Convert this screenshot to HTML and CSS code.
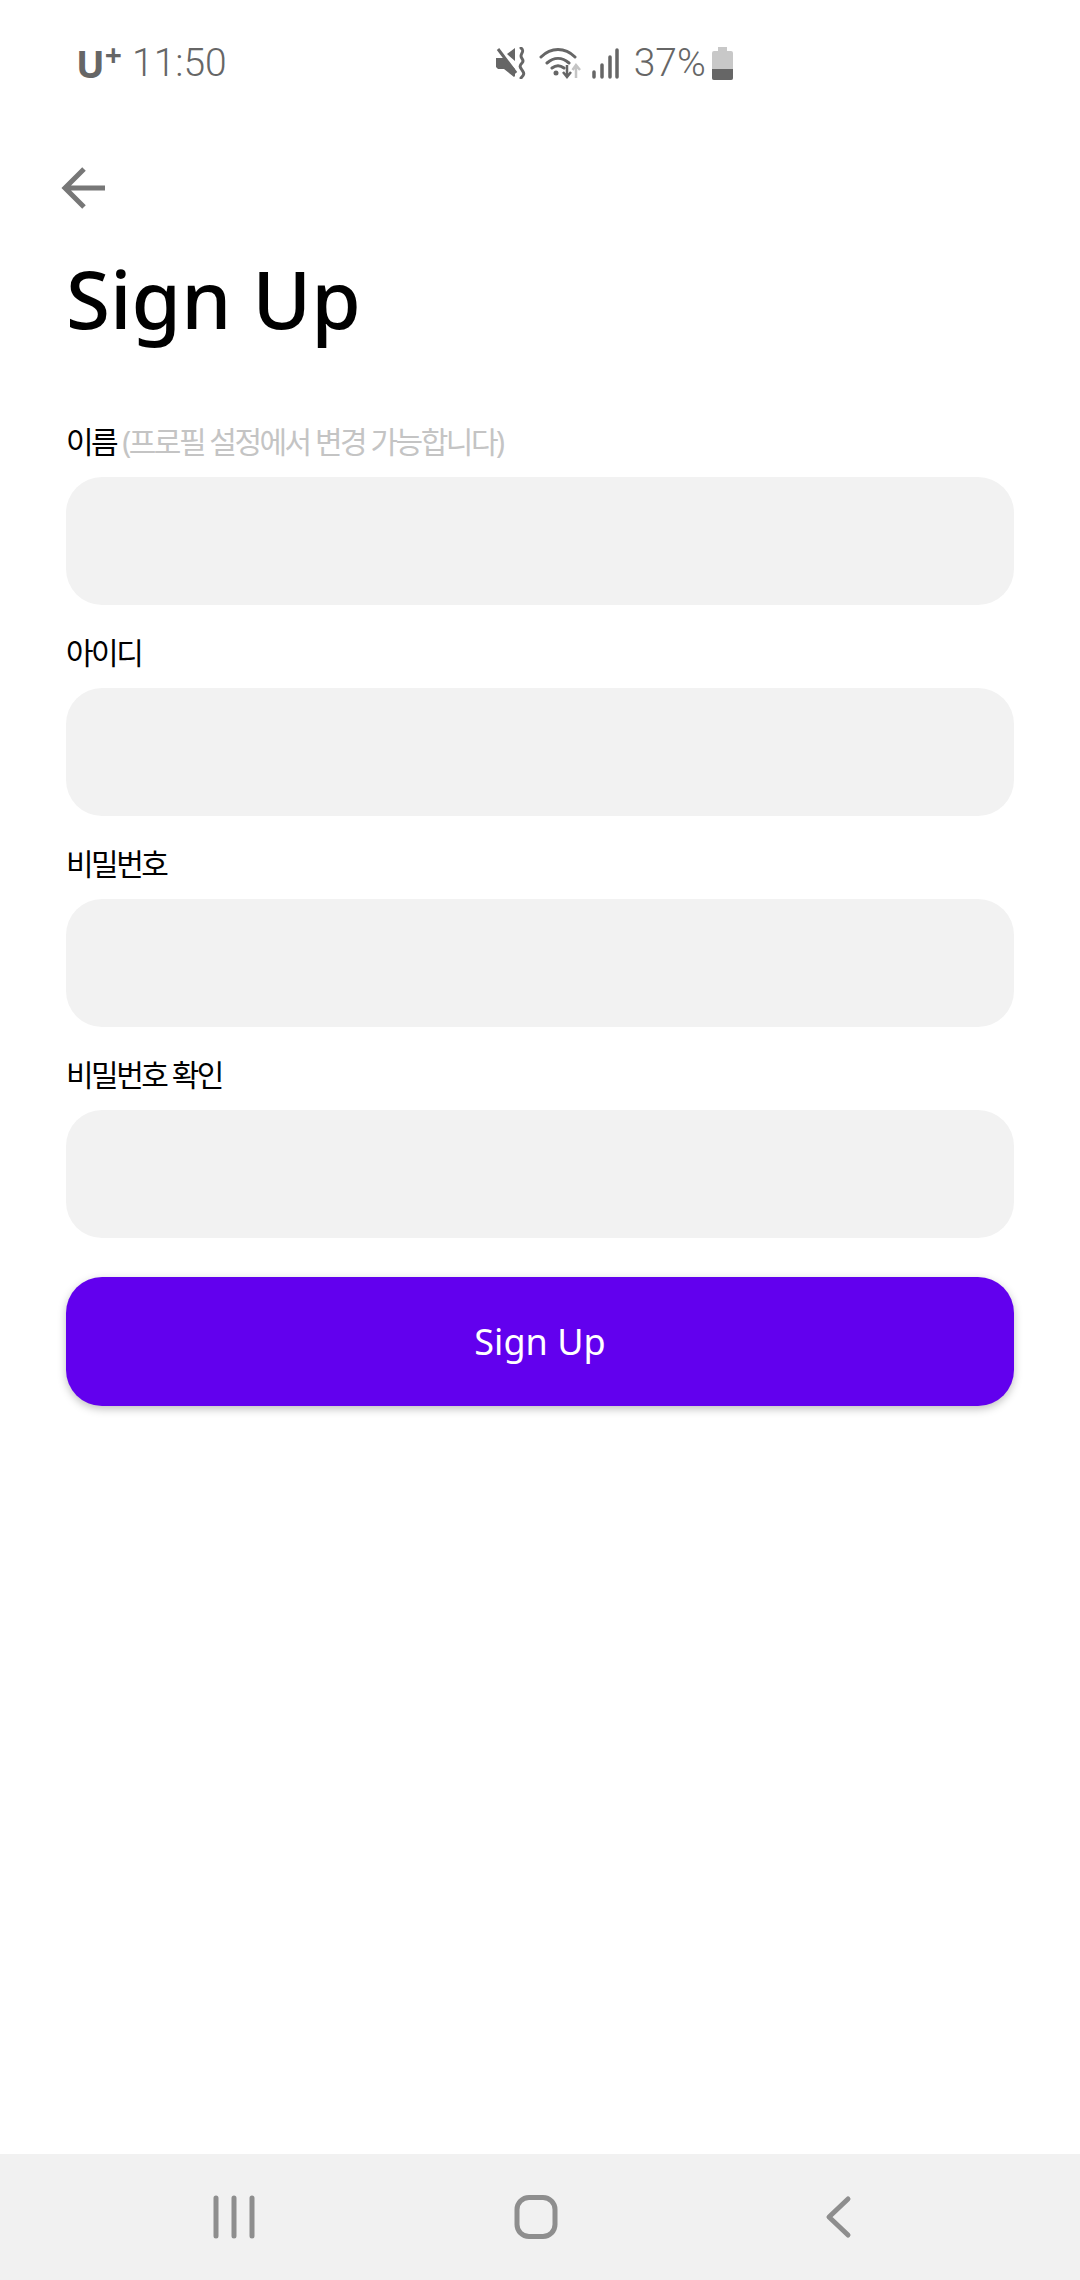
FILE: index.html
```html
<!DOCTYPE html>
<html lang="ko">
    <head>
        <meta charset="utf-8">
        <title>Sign Up</title>
        <link rel="stylesheet" href="styles.css">
    </head>
    <body>
    <div class="statusBar">
        <span class="carrier">U<sup>+</sup></span>
        <span class="clock">11:50</span>
        <div class="statusIcons">
            <!-- mute -->
            <svg class="iconMute" width="30" height="32" viewBox="0 0 30 32">
                <path d="M0 11h6l2 0 11 11v7l-1 1-10-8H2l-2-2z M11 7l8-6v13z" fill="#666"/>
                <path d="M2 2l18 24" stroke="#666" stroke-width="3"/>
                <path d="M25 1c4 3 0 5 0 8s4 4 1 7-2 4 0 7 3 4-1 8" fill="none" stroke="#666" stroke-width="3" stroke-linecap="round"/>
            </svg>
            <!-- wifi -->
            <svg class="iconWifi" width="42" height="31" viewBox="0 0 42 31">
                <path d="M2 9c10-10 24-10 34 0M8 15c7-6 15-6 22 0M13 20c4-3 8-3 12 0" fill="none" stroke="#666" stroke-width="3" stroke-linecap="round"/>
                <circle cx="17" cy="25" r="2.5" fill="#666"/>
                <path d="M28 17v11M24 24l4 5 4-5" fill="none" stroke="#666" stroke-width="2.5"/>
                <path d="M37 30v-11M33.500 22l3.500-5 4 5" fill="none" stroke="#c4c4c4" stroke-width="2.500"/>
            </svg>
            <!-- signal -->
            <svg class="iconSignal" width="27" height="31" viewBox="0 0 27 31">
                <g stroke-width="3.500" stroke-linecap="round">
                    <path d="M2 24v5" stroke="#666"/>
                    <path d="M10 17v12M18 9v20M25 2v27" stroke="#666"/>
                </g>
            </svg>
            <span class="battery">37%</span>
            <!-- battery -->
            <svg class="iconBattery" width="21" height="33" viewBox="0 0 21 33">
                <path d="M6 0h9v4h4a2 2 0 0 1 2 2v25a2 2 0 0 1-2 2H2a2 2 0 0 1-2-2V6a2 2 0 0 1 2-2h4z" fill="#c8c8c8"/>
                <path d="M0 22h21v9a2 2 0 0 1-2 2H2a2 2 0 0 1-2-2z" fill="#666"/>
            </svg>
        </div>
    </div>

    <div class="backRow">
        <svg width="44" height="44" viewBox="0 0 44 44">
            <path d="M3 22h41M23 3L4 22l19 19" fill="none" stroke="#777" stroke-width="5"/>
        </svg>
    </div>

    <h1 class="title">Sign Up</h1>

    <form class="form">
        <div class="field">
            <label class="label">이름<span class="hint">(프로필 설정에서 변경 가능합니다)</span></label>
            <input class="input" type="text">
        </div>
        <div class="field">
            <label class="label">아이디</label>
            <input class="input" type="text">
        </div>
        <div class="field">
            <label class="label">비밀번호</label>
            <input class="input" type="password">
        </div>
        <div class="field">
            <label class="label">비밀번호 확인</label>
            <input class="input" type="password">
        </div>
        <button class="submit" type="button">Sign Up</button>
    </form>

    <div class="navBar">
        <svg width="60" height="44" viewBox="0 0 60 44">
            <path d="M12 3v38M30 3v38M48 3v38" stroke="#8e8e8e" stroke-width="5" stroke-linecap="round"/>
        </svg>
        <svg width="60" height="44" viewBox="0 0 60 44">
            <rect x="11" y="2.500" width="38" height="39" rx="12" fill="none" stroke="#8e8e8e" stroke-width="5"/>
        </svg>
        <svg width="60" height="44" viewBox="0 0 60 44">
            <path d="M40 4L21 22l19 18" fill="none" stroke="#8e8e8e" stroke-width="5" stroke-linecap="round" stroke-linejoin="round"/>
        </svg>
    </div>
    </body>
</html>
```

FILE: styles.css
```css
body{
    margin: 0;
    height: 2280px;
    display: flex;
    flex-direction: column;
    background-color: white;
    font-family: "Noto Sans", "Noto Sans CJK KR", sans-serif;
    overflow: hidden;
}
.statusBar{
    height: 126px;
    display: flex;
    align-items: center;
    padding-left: 76px;
    color: #666;
}
.carrier{
    font-size: 38px;
    font-weight: 700;
    width: 56px;
    line-height: 40px;
}
.carrier sup{
    font-size: 30px;
    line-height: 0;
    vertical-align: 12px;
}
.clock{
    font-family: Roboto, sans-serif;
    font-size: 39px;
    font-weight: 300;
}
.statusIcons{
    display: flex;
    align-items: center;
    margin-left: 269px;
}
.iconWifi{
    margin-left: 13px;
}
.iconSignal{
    margin-left: 11px;
}
.battery{
    font-family: Roboto, sans-serif;
    font-size: 39px;
    font-weight: 300;
    margin-left: 15px;
    margin-right: 6px;
}
.backRow{
    padding-left: 61px;
    padding-top: 40px;
    height: 44px;
}
.title{
    margin: 34px 0 0 66px;
    font-size: 80px;
    line-height: 108px;
    font-weight: 500;
    color: black;
}
.form{
    margin-top: 53px;
    padding: 0 66px;
    display: flex;
    flex-direction: column;
}
.field{
    display: flex;
    flex-direction: column;
    margin-bottom: 11px;
}
.label{
    display: block;
    height: 72px;
    font-size: 30px;
    line-height: 42px;
    letter-spacing: -2.500px;
    color: black;
    padding-top: 16px;
    box-sizing: border-box;
}
.hint{
    color: #c4c4c4;
    margin-left: 6px;
}
.input{
    display: block;
    width: 100%;
    height: 128px;
    box-sizing: border-box;
    border: none;
    border-radius: 36px;
    background-color: #f2f2f2;
}
.submit{
    margin-top: 28px;
    height: 129px;
    border: none;
    border-radius: 36px;
    background-color: #6200ee;
    color: white;
    font-family: "Noto Sans", sans-serif;
    font-size: 36px;
    box-shadow: 0 3px 8px rgba(0,0,0,0.25);
}
.navBar{
    margin-top: auto;
    height: 126px;
    background-color: #f1f1f1;
    display: flex;
    align-items: center;
    gap: 242px;
    padding-left: 204px;
}
```
